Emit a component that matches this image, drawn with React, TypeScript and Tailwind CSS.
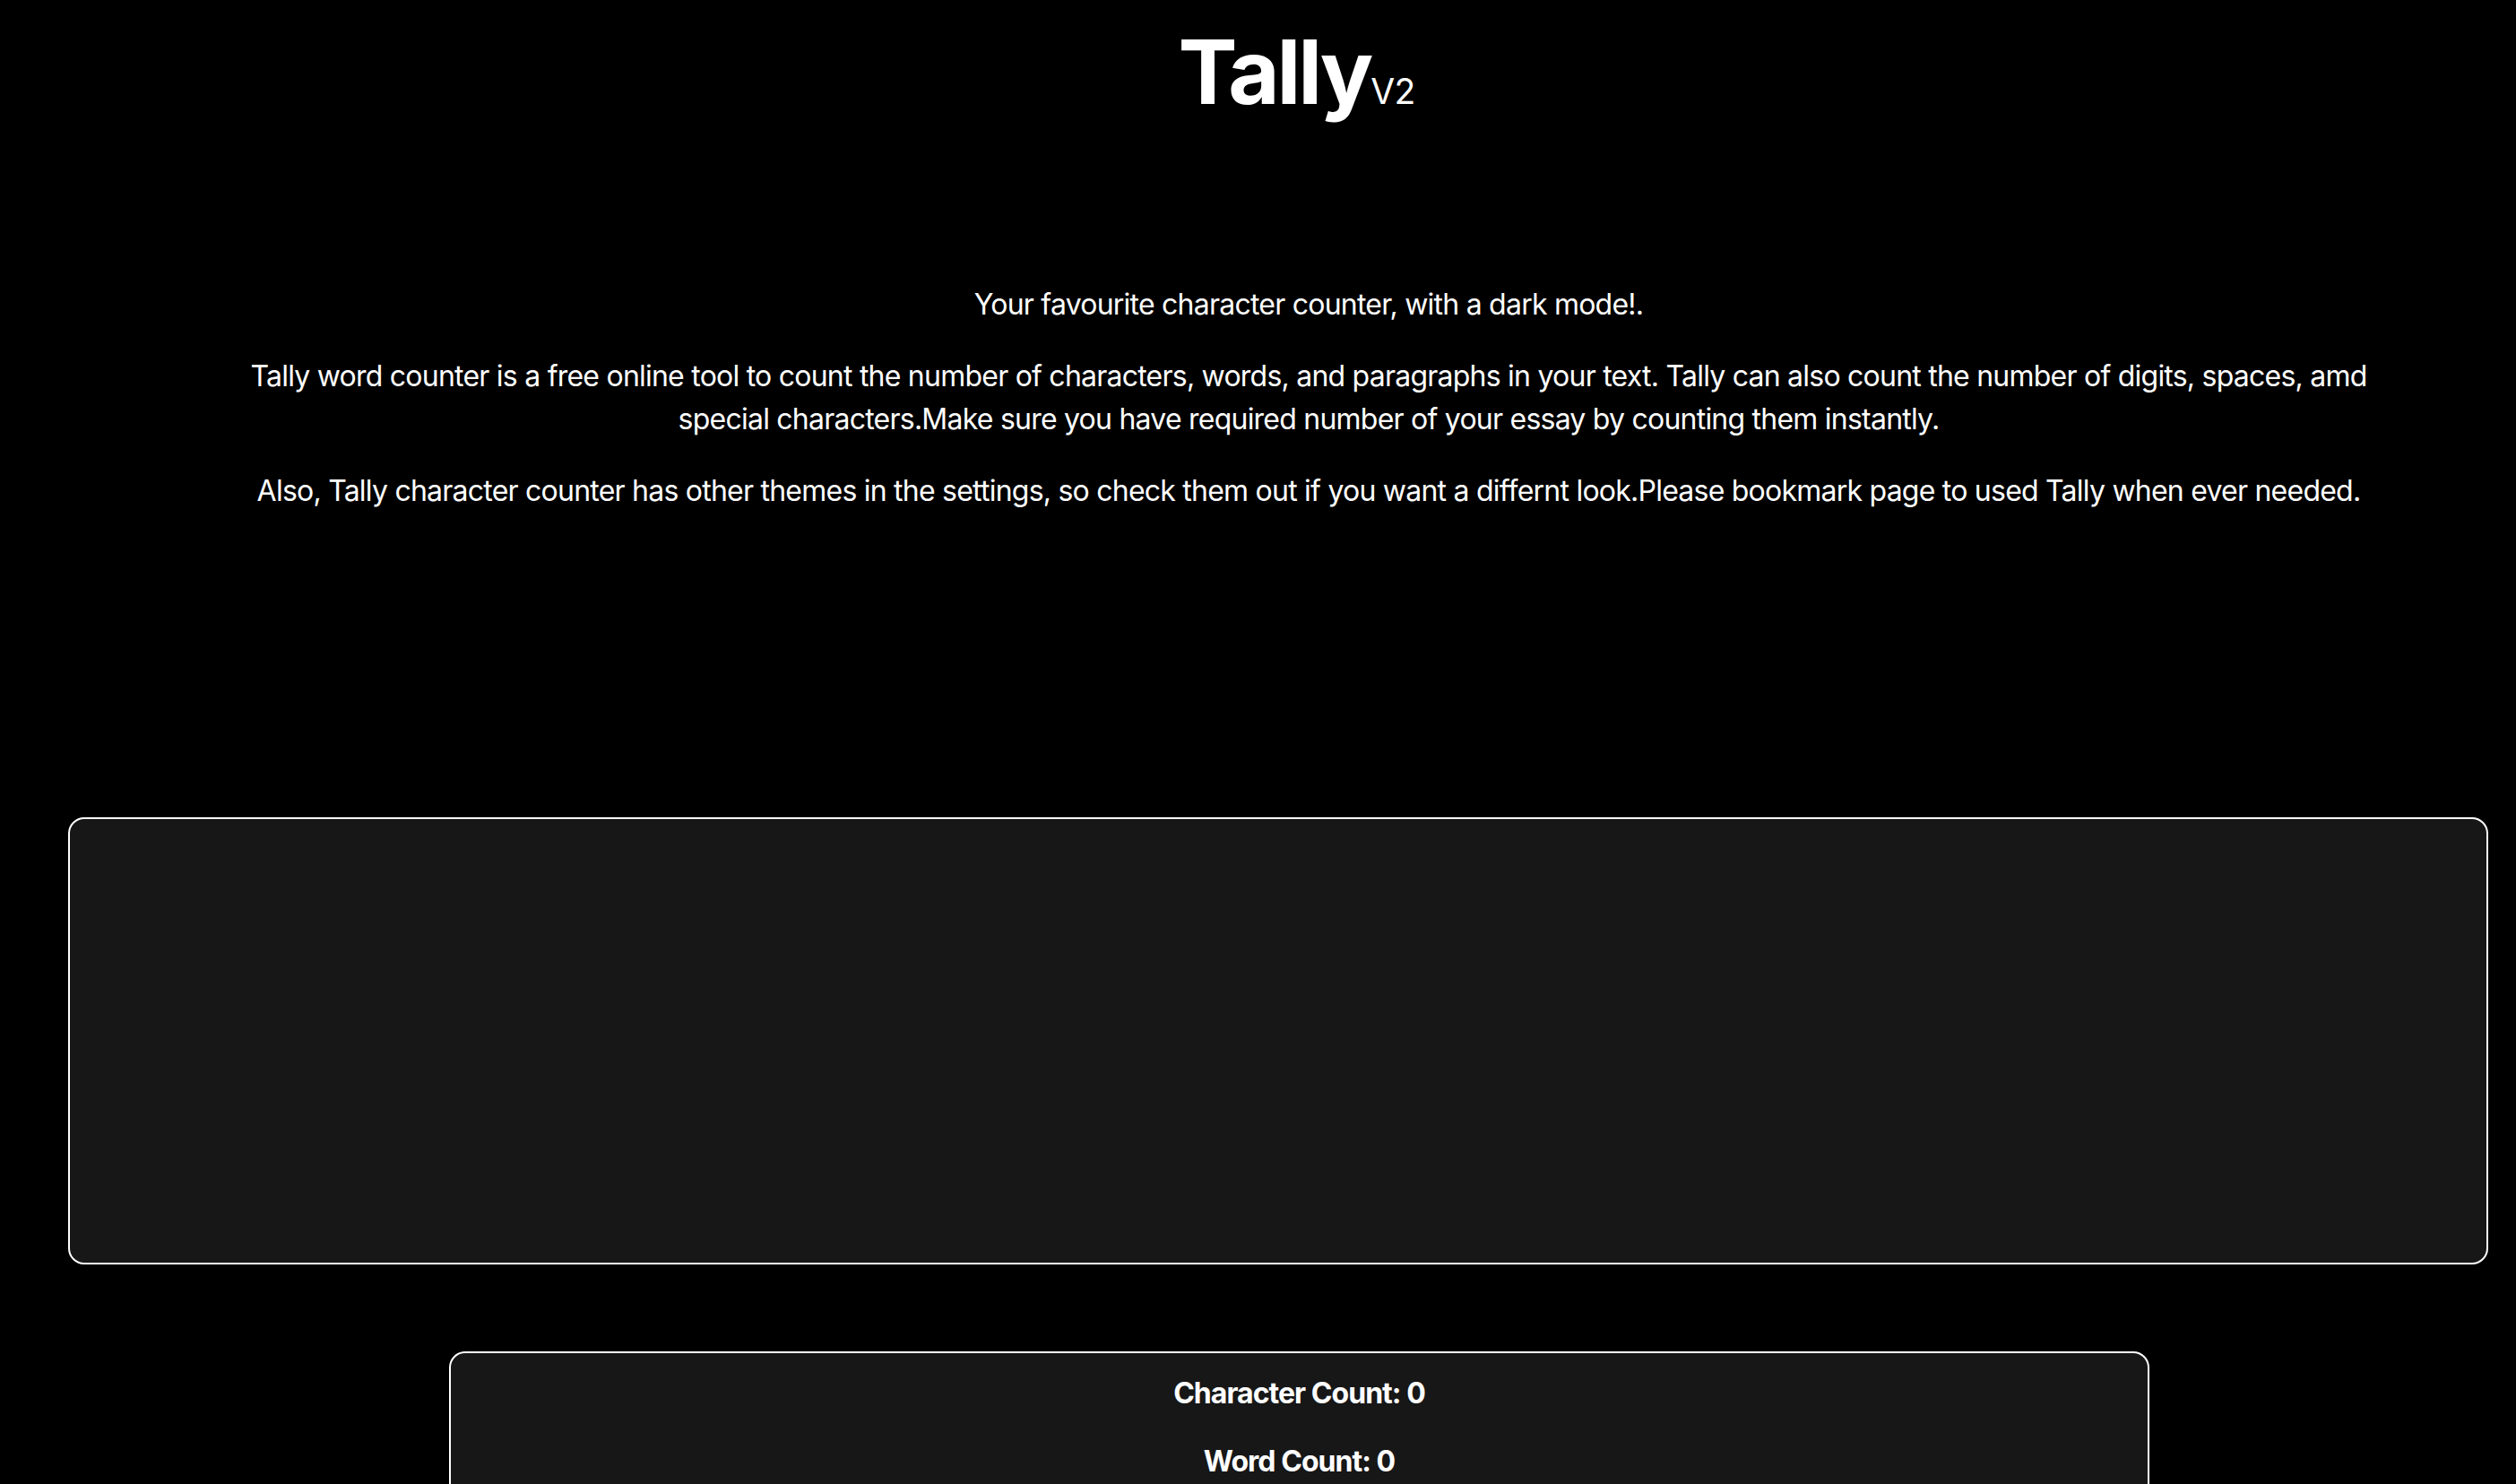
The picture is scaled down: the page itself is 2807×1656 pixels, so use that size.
import { useState } from 'react';

const font = { fontFamily: 'Inter, "Noto Sans", sans-serif' };

export default function App() {
  const [text, setText] = useState('');

  const chars = text.length;
  const words = text.trim() ? text.trim().split(/\s+/).length : 0;
  const paragraphs = text.trim() ? text.split(/\n+/).filter((p) => p.trim()).length : 0;

  return (
    <div className="h-screen overflow-hidden bg-black text-white" style={font}>
      {/* header */}
      <div className="flex justify-center items-baseline pl-[86px] pt-[31px]">
        <h1 className="text-[99px] font-bold leading-none tracking-[-0.032em]">Tally</h1>
        <span className="text-[39px] leading-none tracking-[-0.02em]">V2</span>
      </div>

      {/* intro copy */}
      <div className="ml-[240px] w-[2440px] text-center text-[32px] leading-[48px] tracking-[-0.024em] mt-[186px] flex flex-col gap-[32px]">
        <p>Your favourite character counter, with a dark mode!.</p>
        <p>
          Tally word counter is a free online tool to count the number of characters, words, and paragraphs in your
          text. Tally can also count the number of digits, spaces, amd special characters.Make sure you have required
          number of your essay by counting them instantly.
        </p>
        <p>
          Also, Tally character counter has other themes in the settings, so check them out if you want a differnt
          look.Please bookmark page to used Tally when ever needed.
        </p>
      </div>

      {/* input */}
      <textarea
        value={text}
        onChange={(e) => setText(e.target.value)}
        className="block ml-[76px] mt-[340px] w-[2700px] h-[499px] rounded-[18px] border-2 border-white bg-[#171717] p-6 text-[32px] text-white outline-none resize-none"
      />

      {/* counts */}
      <div className="ml-[501px] mt-[97px] w-[1897px] rounded-[18px] border-2 border-white bg-[#171717] pt-[21px] pb-8 flex flex-col gap-[28px] text-center text-[32px] leading-[48px] font-bold tracking-[-0.03em]">
        <p>Character Count: {chars}</p>
        <p>Word Count: {words}</p>
        <p>Paragraph Count: {paragraphs}</p>
      </div>
    </div>
  );
}
